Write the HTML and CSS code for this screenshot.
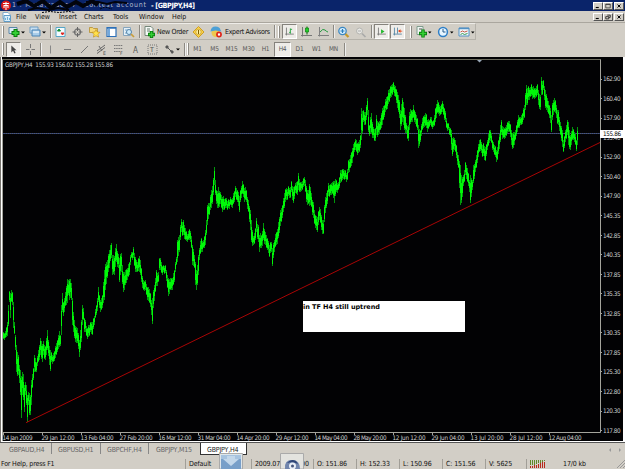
FILE: index.html
```html
<!DOCTYPE html>
<html lang="en">
<head>
  <meta charset="UTF-8">
  <title>GBPJPY,H4</title>
  <link rel="stylesheet" href="styles.css">
</head>
<body>
  <div class="app">
    <div class="titlebar">
      <svg class="logo" viewBox="0 0 12 11"><circle cx="6" cy="5.5" r="5" fill="#d81818"/><path d="M3 3.500h6M6 2v8M3.500 5.500h5M4 6v2M8 6v2" stroke="#fff" fill="none"/></svg>
      <div class="account">
        <span class="ghost">1 : MetaTrader 4 - Contest account</span>
        <svg class="scribble" viewBox="0 0 145 14"><path d="M3 4l9-3 8 5 9-5 8 7 9-6 7 5 9-5 7 4 9-5 6 4" stroke="#02040c" stroke-width="4" fill="none"/><path d="M72 2l12 0 9 2 8-2 12 1M14 10l9-2 12 2 9-2 11 2" stroke="#02040c" stroke-width="2" fill="none"/><path d="M28 12.500l8-1 9 1 10-1 6 1M86 9l5-2 7 2" stroke="#02040c" stroke-dasharray="2 1" fill="none"/></svg>
      </div>
      <b class="doc">- [GBPJPY,H4]</b>
      <div class="winbtns">
        <svg viewBox="0 0 10 8"><path d="M2 6h4" stroke="#000" stroke-width="1.500"/></svg>
        <svg viewBox="0 0 10 8"><path d="M2 1.500h6v5H2zM2 2h6" stroke="#333" fill="none"/></svg>
        <svg class="close" viewBox="0 0 10 8"><path d="M3 2l4 4M7 2l-4 4" stroke="#000" stroke-width="1.300"/></svg>
      </div>
    </div>

    <div class="menubar">
      <svg class="docicon" viewBox="0 0 10 10"><path d="M1 .5h5l2 2v4H1z" fill="#fff" stroke="#7fabcd"/><path d="M2 3.500h6.500v6H2z" fill="#d9eefb" stroke="#5f9cc8"/><path d="M3.500 8V6M5.500 8V5M7.500 8V6" stroke="#6fb0d8"/></svg>
      <span class="m-file">File</span><span class="m-view">View</span><span class="m-insert">Insert</span><span class="m-charts">Charts</span><span class="m-tools">Tools</span><span class="m-window">Window</span><span>Help</span>
      <div class="winbtns">
        <svg viewBox="0 0 10 8"><path d="M2 6h4" stroke="#000" stroke-width="1.500"/></svg>
        <svg viewBox="0 0 10 8"><path d="M4 1.500h4v3H6M2 3.500h4v3H2z" stroke="#111" fill="none"/></svg>
        <svg class="close" viewBox="0 0 10 8"><path d="M3 2l4 4M7 2l-4 4" stroke="#000" stroke-width="1.300"/></svg>
      </div>
    </div>

    <div class="toolbar main">
      <i class="grip"></i>
      <svg class="ic drop" viewBox="0 0 21 14"><path d="M3 2.500h8v6H3z" fill="#dcecf7" stroke="#5d87a8"/><path d="M9.500 4v8M5.500 8h8" stroke="#087d0c" stroke-width="4"/><path d="M9.500 5v6M6.500 8h6" stroke="#35cf35" stroke-width="2"/><path d="M15 6.500h4l-2 2z"/></svg>
      <svg class="ic drop" viewBox="0 0 21 14"><path d="M3 2h8v6H3z" fill="#c7dff1" stroke="#6f9ec5"/><path d="M5 5h8v6H5z" fill="#a9cdea" stroke="#4a83b4"/><path d="M6 7h6" stroke="#fff"/><path d="M15 6.500h4l-2 2z"/></svg>
      <i class="sep"></i>
      <svg class="ic" viewBox="0 0 17 14"><path d="M4 2.500h9v9H4z" fill="#f4fbff" stroke="#57a6c8"/><path d="M5.500 6l1.500-2 1.500 2z" stroke="#0a8e2c" fill="#0a8e2c"/><path d="M9 8h3l-1.500 2z" fill="#e02820" stroke="#e02820"/></svg>
      <svg class="ic" viewBox="0 0 17 14"><circle cx="8.500" cy="7" r="3" fill="none" stroke="#777" stroke-width="1.300"/><path d="M8.500 2v4M8.500 8v4M3.500 7h4M9.500 7h4" stroke="#666"/></svg>
      <svg class="ic" viewBox="0 0 17 14"><path d="M3.500 2.500h3l1 1h4v4h-8z" fill="#f4d777" stroke="#b58e2e" stroke-width=".8"/><path d="M10 4.500l1.300 2.500 2.700.3-2 2 .6 2.800L10 10.800l-2.600 1.300.6-2.800-2-2 2.700-.3z" fill="#ffe04a" stroke="#c08a10" stroke-width=".6"/></svg>
      <svg class="ic" viewBox="0 0 17 14"><path d="M4 2.500h9v9H4z" fill="#fff" stroke="#2d70b8" stroke-width="1.200"/><path d="M4 3h9" stroke="#2d70b8" stroke-width="1.500"/><path d="M5 4h2v7H5z" fill="#72a8dc"/></svg>
      <svg class="ic" viewBox="0 0 17 14"><path d="M3.500 2.500h7v8h-7z" fill="#e6f0f7" stroke="#86a5bd"/><path d="M5 5h4M5 8h3" stroke="#75a7cc"/><circle cx="9" cy="7" r="2.500" fill="#cdeafb" stroke="#5484aa"/><path d="M11 9l3 3" stroke="#c89d3b" stroke-width="1.700"/></svg>
      <i class="sep s2"></i>
      <svg class="ic" viewBox="0 0 17 14"><path d="M4 1.500h6l2 2v7H4z" fill="#f6faf8" stroke="#74877a"/><path d="M6 4h3M6 6h3" stroke="#657b6b"/><path d="M10.500 6v7M7 9.500h7" stroke="#087d0c" stroke-width="3.400"/><path d="M10.500 6.800v5.400M7.800 9.500h5.400" stroke="#35cf35" stroke-width="1.600"/></svg>
      <span class="neworder">New Order</span>
      <svg class="ic" viewBox="0 0 17 14"><path d="M7.500 1.500L13 7l-5.500 5.500L2 7z" fill="#f9d34b" stroke="#c79010" stroke-width=".8"/><circle cx="7.500" cy="7" r="2.700" fill="#fff0a0" stroke="#b98610" stroke-width=".6"/><path d="M7.500 5v4" stroke="#806000"/></svg>
      <svg class="ic" viewBox="0 0 17 14"><ellipse cx="7.500" cy="7.500" rx="4" ry="4.500" fill="#edc84e"/><path d="M2.500 6.500q.5-5 5-5T12.500 5l1 1.500-6-1z" fill="#4da0d6"/><circle cx="11" cy="9.500" r="2.900" fill="#df2318"/><path d="M9.900 8.400h2.200v2.200H9.900z" fill="#fff"/></svg>
      <span class="experts">Expert Advisors</span>
      <i class="sep s3"></i><i class="grip g2"></i>
      <svg class="ic btn on b1" viewBox="0 0 15 15"><path d="M4 3v9M2.500 10.500h10" stroke="#777" fill="none"/><path d="M8.500 4v6M7 8.500h1.500M8.500 5h2" stroke="#18a335"/></svg>
      <svg class="ic c1" viewBox="0 0 17 14"><path d="M4.500 2v9.500M3 10.500h11" stroke="#777" fill="none"/><path d="M9 1.500v8" stroke="#096c0b"/><path d="M7.500 3h3v4h-3z" fill="#20d028" stroke="#087d0c" stroke-width=".7"/></svg>
      <svg class="ic" viewBox="0 0 17 14"><path d="M4.500 2v9.500M3 10.500h11" stroke="#808080" fill="none"/><path d="M5 7q3-4 5-2t3 2" stroke="#219a3c" fill="none"/></svg>
      <i class="sep s4"></i>
      <svg class="ic" viewBox="0 0 17 14"><path d="M10 8.500l3.500 3.500" stroke="#c69a29" stroke-width="2.200"/><circle cx="7.500" cy="6" r="3.700" fill="#d8f0ff" stroke="#3d87c0" stroke-width="1.300"/><path d="M5.500 6h4M7.500 4v4" stroke="#267dbd" stroke-width="1.200"/></svg>
      <svg class="ic" viewBox="0 0 17 14"><path d="M10 8.500l3.500 3.500" stroke="#aaa" stroke-width="1.700"/><circle cx="7.500" cy="6" r="3" fill="#e8e8e5" stroke="#b4b4b0"/><path d="M6 6h3" stroke="#aaa"/></svg>
      <i class="sep s5"></i>
      <svg class="ic btn on" viewBox="0 0 15 15"><path d="M4 3v9M2.500 10.500h10" stroke="#777"/><path d="M7 5l4 2.500-4 2.500z" fill="#24b72d"/></svg>
      <svg class="ic btn on b3" viewBox="0 0 15 15"><path d="M4 3v9M2.500 10.500h10M7.500 3v7" stroke="#5585a5"/><path d="M8 7l3-2v1.500h2v1h-2V9z" fill="#e44317"/></svg>
      <i class="grip g3"></i>
      <svg class="ic drop d1" viewBox="0 0 21 14"><path d="M3 1.500h6v8H3z" fill="#eef6f2" stroke="#7f9b8c"/><path d="M5 4h3" stroke="#555"/><path d="M9 4.500v8M5 8.500h8" stroke="#087d0c" stroke-width="3.400"/><path d="M9 5.300v6.400M5.800 8.500h6.400" stroke="#35cf35" stroke-width="1.700"/><path d="M14 6.500h3.500l-1.700 2z"/></svg>
      <svg class="ic drop" viewBox="0 0 21 14"><circle cx="8" cy="7" r="4.400" fill="#e7f5ff" stroke="#2e7fc7" stroke-width="1.500"/><path d="M8 4v3h2.500" fill="none" stroke="#265b8a"/><path d="M15 6.500h3.500l-1.700 2z"/></svg>
      <svg class="ic drop" viewBox="0 0 21 14"><path d="M3 3h10v8H3z" fill="#eff6fb" stroke="#5291c4"/><path d="M3 3.500h10" stroke="#5291c4" stroke-width="1.500"/><path d="M4.500 7l2-1 2 1 3-1" stroke="#c85b46" fill="none"/><path d="M4.500 9.500l2-1 2 1 3-1" stroke="#389b52" fill="none"/><path d="M15 6.500h3.500l-1.700 2z"/></svg>
    </div>

    <div class="toolbar draw">
      <i class="grip"></i>
      <svg class="btn on cur" viewBox="0 0 15 15"><path d="M5 3v8l2-2 1.500 3.200 1.500-.7L8.500 8.500H11z" fill="#444"/></svg>
      <svg class="ic x1" viewBox="0 0 17 14"><path d="M8.500 2v4M8.500 9v4M4 7.500h3.500M9.500 7.500H13" stroke="#777"/></svg>
      <i class="sep t1"></i>
      <svg class="ic" viewBox="0 0 17 14"><path d="M8.500 3.500v8" stroke="#888"/></svg>
      <svg class="ic" viewBox="0 0 17 14"><path d="M5 7.500h7" stroke="#777"/></svg>
      <svg class="ic" viewBox="0 0 17 14"><path d="M5 11l7-7" stroke="#777"/></svg>
      <svg class="ic" viewBox="0 0 17 14"><path d="M4 9l8-6M4 11.500l8-6M6 4l3 5" stroke="#666"/><text x="10" y="12.500" font-size="5">E</text></svg>
      <svg class="ic" viewBox="0 0 17 14"><path d="M4 3.500h9M4 6.500h9M4 9.500h6" stroke="#777" stroke-dasharray="1.500 .7"/><text x="10" y="12.500" font-size="5">F</text></svg>
      <svg class="ic" viewBox="0 0 17 14"><text x="6" y="10.500" font-size="8">A</text></svg>
      <svg class="ic" viewBox="0 0 17 14"><path d="M4 3h9v9H4z" fill="none" stroke="#777" stroke-dasharray="1 1"/><text x="6" y="10" font-size="7">T</text></svg>
      <svg class="ic drop" viewBox="0 0 21 14"><path d="M4 5l2-2 2 2-2 2zM9 9l2-1 2 2-2 2z" fill="#555"/><path d="M7 6l3 3" stroke="#555"/><path d="M15 6.500h4l-2 2z"/></svg>
      <i class="sep t2"></i><i class="grip g4"></i>
      <span class="tf">M1</span><span class="tf">M5</span><span class="tf">M15</span><span class="tf">M30</span><span class="tf">H1</span><span class="tf on">H4</span><span class="tf">D1</span><span class="tf">W1</span><span class="tf">MN</span>
      <i class="sep"></i>
    </div>

    <div class="chart">
      <svg id="plot" width="625" height="385" viewBox="0 57 625 385">
        <rect x="2" y="57" width="621" height="384" fill="#020204"/>
        <path d="M2.500 441V59.500H600.500V432.500H3" fill="none" stroke="#a4a49c"/>
        <path d="M3 59.500h597" stroke="#6b6b5c"/>
        <path d="M477 60h5l-2.500 2.500z" fill="#9aa8b8"/>
        <path d="M3 133.500h597" stroke="#555a66"/>
        <path d="M3 133.500h597" stroke="#2b3f7c" stroke-dasharray="1 1"/>
        <text x="5" y="66.500" textLength="108" font-size="6.200">GBPJPY,H4&#160; 155.93 156.02 155.28 155.86</text>
        <g id="bars"></g>
        <path d="M26 422.700L600 142.500" stroke="#a80505" fill="none"/>
        <g id="axes"></g>
        <rect x="600" y="130" width="23" height="8" fill="#fff"/>
        <text class="now" x="603" y="136.300" textLength="18">155.86</text>
        <rect x="303" y="301" width="162" height="31" fill="#fff"/>
        <text class="note" x="303" y="308.500" textLength="77">in TF H4 still uptrend</text>
      </svg>
    </div>

    <div class="tabs">
      <span class="tab a">GBPAUD,H4</span><span class="tab b">GBPUSD,H1</span><span class="tab c">GBPCHF,H4</span><span class="tab d">GBPJPY,M15</span><span class="tab active">GBPJPY,H4</span>
      <svg class="arrows" viewBox="0 0 14 8"><path d="M3 2v4L1 4zM11 2v4l2-2z" fill="#999"/></svg>
    </div>

    <div class="status">
      <span class="help">For Help, press F1</span>
      <span class="cell profile">Default</span>
      <span class="cell date">2009.07.08 00:00</span>
      <span class="cell">O: 151.86</span><span class="cell">H: 152.33</span><span class="cell">L: 150.96</span><span class="cell">C: 151.56</span>
      <span class="cell vol">V: 5625</span>
      <span class="cell conn"><svg viewBox="0 0 15 8"><path d="M.5 0v5M2.500 0v5M4.500 0v5M6.500 0v4M8.500 0v3M10.500 0v3M12.500 0v2M14.500 0v1" stroke="#5d8a28"/><path d="M.5 6v2M2.500 6v2M4.500 5v3M6.500 5v3M8.500 4v4M10.500 3v5M12.500 2v6M14.500 2v6" stroke="#b9281c"/></svg>17/0 kb</span>
      <svg class="resize" viewBox="0 0 8 8"><path d="M0 8l8-8M3 8l5-5M6 8l2-2" stroke="#999"/></svg>
      <svg class="float f1" viewBox="0 0 24 16"><path d="M.5.500h23V16H.5z" fill="#dfe6ea" stroke="#aaa"/><path d="M2 2h20v14H2z" fill="#789fc9"/><path d="M2 2h20v4H2z" fill="#a7c3df"/><path d="M8 3h8v3h4l-8 7-8-7h4z" fill="#c3d7ea"/></svg>
      <svg class="float f2" viewBox="0 0 24 16"><path d="M.5.500h23V16H.5z" fill="#e3e3df" stroke="#aaa"/><path d="M5 16q-1-9 7-9t8 9z" fill="#7185ad"/><path d="M7 10q4-5 9-2l2 3q-5-3-11-1z" fill="#2f4678"/><circle cx="12.500" cy="13" r="3.500" fill="#e9eef6"/><circle cx="12.500" cy="13" r="1.500" fill="#46557c"/></svg>
    </div>
  </div>
  <script src="chart.js"></script>
</body>
</html>
```
FILE: styles.css
```css
:root {
  --face: #d2cec6;
  --shade: #8c8982;
  --navy: #0a246a;
}
body {
  margin: 0;
  background: var(--face);
  font-family: "DejaVu Sans Condensed", "DejaVu Sans", Tahoma, sans-serif;
  font-stretch: condensed;
  font-size: 7px;
  line-height: 10px;
  color: #111;
  overflow: hidden;
}
.app {
  width: 625px;
  height: 469px;
  display: flex;
  flex-direction: column;
}
svg {
  display: block;
  flex: none;
}
span, b {
  white-space: nowrap;
  flex: none;
}

/* title and menu */
.titlebar {
  height: 11px;
  background: var(--navy);
  color: #fff;
  display: flex;
  align-items: center;
}
.logo {
  width: 12px;
  height: 11px;
}
.account {
  width: 139px;
  height: 11px;
  position: relative;
}
.ghost {
  color: #b4bccd;
  letter-spacing: 0.75px;
}
.scribble {
  position: absolute;
  left: 2px;
  top: 0;
  width: 145px;
  height: 14px;
}
.doc {
  font-size: 7.2px;
  width: 48px;
  letter-spacing: -0.4px;
}
.winbtns {
  display: flex;
  margin-left: auto;
  margin-right: 1px;
}
.winbtns svg {
  width: 10px;
  height: 8px;
  background: var(--face);
  box-sizing: border-box;
  border: 1px solid;
  border-color: #fff #555 #555 #fff;
}
.winbtns .close {
  margin-left: 1px;
}
.menubar {
  height: 12px;
  display: flex;
  align-items: center;
  border-bottom: 1px solid #aaa69e;
  box-sizing: border-box;
}
.docicon {
  width: 10px;
  height: 10px;
  margin: 0 4px 0 2px;
}
.m-file { width: 19px; }
.m-view { width: 24px; }
.m-insert { width: 25px; }
.m-charts { width: 29px; letter-spacing: -0.2px; }
.m-tools { width: 26px; }
.m-window { width: 33px; }

/* toolbars */
.toolbar {
  height: 17px;
  display: flex;
  align-items: center;
  box-sizing: border-box;
}
.main {
  width: 476px;
  border-top: 1px solid #eeece8;
  border-right: 1px solid #b5b2aa;
  border-bottom: 1px solid #b5b2aa;
}
.draw {
  padding-top: 1px;
}
.ic {
  width: 17px;
  height: 14px;
}
.ic.drop {
  width: 21px;
}
.grip {
  width: 0;
  height: 12px;
  margin: 0 2px;
  border-left: 1px solid #fff;
  border-right: 1px solid var(--shade);
}
.sep {
  width: 0;
  height: 13px;
  margin-left: 2px;
  border-left: 1px solid var(--shade);
  border-right: 1px solid #eee;
}
.neworder {
  width: 34px;
  letter-spacing: -0.3px;
  margin-left: -1px;
}
.experts {
  width: 49px;
  letter-spacing: -0.3px;
}
.s3 { margin-left: 0; }
.s4 { margin-left: 1px; }
.g2 { margin: 0 2px; }
.g3 { margin: 0 0 0 5px; }
.s5 { margin: 0 1px 0 2px; }
.btn {
  width: 15px;
  height: 15px;
}
.on {
  background: #eeece8;
  border: 1px solid;
  border-color: #85827c #fff #fff #85827c;
  box-sizing: border-box;
}
.c1 { margin-left: 1px; }
.b3 { margin-left: 1px; }
.d1 { margin-left: 2px; }
.toolbar text {
  fill: #555;
}
.x1 { margin-left: 1px; }
.t1 { margin: 0 0 0 1px; }
.t2 { margin-left: 2px; }
.g4 { margin: 0 0 0 1px; }
.tf {
  width: 17px;
  height: 15px;
  line-height: 15px;
  text-align: center;
  box-sizing: border-box;
  font-size: 6.5px;
  letter-spacing: -0.2px;
  color: #555;
}
.tf.on {
  line-height: 13px;
}

/* chart window */
.chart {
  height: 385px;
  background: linear-gradient(90deg, #77746e 1px, #fff 1px 2px, #fff 2px);
}
.chart text {
  fill: #d0d0d0;
  font-size: 6.3px;
}
.chart .now {
  fill: #000;
}
.chart .note {
  fill: #000;
  font-family: "DejaVu Sans", sans-serif;
  font-weight: bold;
  font-stretch: normal;
  font-size: 6.5px;
}

/* chart tabs */
.tabs {
  height: 15px;
  display: flex;
  align-items: flex-start;
  border-top: 1px solid #555;
  box-sizing: border-box;
  color: #666;
}
.tab {
  box-sizing: border-box;
  height: 11px;
  letter-spacing: -0.2px;
  border-right: 1px solid #888;
  line-height: 14px;
}
.tab.a { width: 52px; padding-left: 9px; }
.tab.b { width: 49px; padding-left: 6px; }
.tab.c { width: 48px; padding-left: 6px; }
.tab.d { width: 51px; padding-left: 7px; border: 0; }
.tab.active {
  width: 47px;
  height: 12px;
  padding-left: 6px;
  background: #fff;
  color: #222;
  border: 1px solid #333;
  border-top: 0;
}
.arrows {
  width: 14px;
  height: 8px;
  margin: 3px 3px 0 auto;
}

/* status bar */
.status {
  height: 12px;
  display: flex;
  align-items: center;
  padding-top: 1px;
  box-sizing: border-box;
  position: relative;
}
.help {
  width: 184px;
  padding-left: 1px;
  letter-spacing: -0.18px;
}
.cell {
  width: 43px;
  height: 10px;
  box-sizing: border-box;
  padding-left: 3px;
  border-left: 1px solid #a19e97;
  letter-spacing: -0.12px;
}
.profile { width: 66px; }
.date { width: 62px; letter-spacing: -0.15px; }
.vol { width: 41px; }
.conn {
  width: 86px;
  display: flex;
}
.conn svg {
  width: 15px;
  height: 8px;
  margin: 1px 18px 0 0;
}
.resize {
  width: 8px;
  height: 8px;
  margin-left: auto;
}
.float {
  position: absolute;
  width: 24px;
  height: 16px;
  bottom: 0;
}
.f1 { left: 219px; }
.f2 { left: 280px; }
```
FILE: chart.js
```js
// x, high, low for each bar group, in window pixels
const prices = `3 332 339,5 331 338,7 322 336,8 305 326,9 291 302,10 293 318,11 290 302,12 292 305,13 302 328,14 322 334,15 335 350,16 345 372,18 355 375,19 365 383,20 370 395,21 376 418,22 372 395,23 374 400,24 385 412,25 382 395,26 385 405,27 395 422,28 392 405,29 393 415,30 395 415,31 380 405,32 374 388,33 368 380,34 355 372,35 358 372,36 362 372,37 356 366,38 350 362,39 345 360,40 338 355,42 344 362,43 341 355,45 346 360,47 330 350,48 340 356,50 350 371,51 352 362,53 353 362,55 346 358,57 340 352,59 331 347,60 335 346,61 305 335,62 293 312,63 302 316,65 292 306,67 279 303,68 280 295,69 279 300,71 283 300,72 298 325,73 312 332,75 326 342,77 328 343,79 340 357,80 330 350,81 320 342,82 305 325,83 308 320,84 318 332,86 326 336,88 325 337,90 322 332,92 322 335,94 316 325,96 305 315,98 287 302,100 300 312,102 295 308,104 270 300,105 264 290,107 260 278,109 250 268,111 243 258,112 255 275,114 256 275,116 244 262,118 254 268,119 258 282,121 253 272,123 272 292,125 270 285,127 268 280,129 262 275,131 252 258,133 247 258,135 257 272,137 262 272,139 256 272,141 268 282,143 280 290,145 280 290,147 287 300,149 289 303,151 300 315,152 298 324,153 290 308,155 278 292,156 270 286,158 272 282,159 258 270,161 262 273,163 265 272,165 265 273,167 275 288,168 278 296,170 278 290,172 278 290,174 270 282,176 257 265,177 240 262,179 235 252,180 225 240,181 219 232,183 220 235,185 228 240,187 234 242,189 229 240,191 236 248,192 245 265,194 255 268,195 262 285,196 270 290,198 255 275,199 248 260,201 238 252,203 240 248,205 230 245,206 220 235,207 205 225,209 203 215,211 190 208,213 178 195,214 167 185,215 180 195,216 190 204,218 187 208,220 192 204,222 197 212,225 198 208,228 199 208,231 199 207,233 193 204,235 186 197,237 190 202,239 196 212,240 190 202,242 181 194,244 188 202,246 190 202,248 200 212,250 210 230,251 220 242,253 236 245,255 228 240,256 218 232,258 225 242,259 235 252,261 235 248,263 223 240,265 232 245,267 238 250,269 245 257,271 242 252,272 248 266,274 240 252,276 232 245,278 222 238,280 210 226,282 205 218,284 193 208,286 188 200,288 186 196,290 187 198,291 181 192,293 187 203,295 183 193,297 181 195,298 173 190,300 182 192,302 181 190,304 177 186,306 186 202,308 190 204,309 184 206,311 193 207,313 202 218,315 215 228,317 217 232,319 207 220,321 215 230,323 220 234,324 205 222,326 193 208,328 183 196,330 184 195,332 182 194,334 181 203,336 180 192,338 182 190,340 170 183,342 169 180,344 170 180,346 173 182,348 160 173,350 155 168,352 148 163,354 142 152,356 140 152,358 142 153,360 135 148,361 108 140,363 110 122,365 112 125,367 98 115,368 110 132,369 125 136,371 113 134,373 127 138,375 128 141,376 115 135,378 122 135,380 118 130,382 108 125,384 105 117,386 97 110,388 90 104,390 86 98,392 84 95,393 82 92,395 86 97,397 92 108,399 100 118,400 110 130,402 98 122,404 108 130,405 115 133,406 123 133,408 125 141,409 112 130,411 110 122,413 105 118,415 112 124,417 118 130,418 125 148,420 130 142,422 118 130,424 115 127,426 114 128,427 120 132,429 120 127,431 117 127,433 120 127,435 108 122,437 100 113,438 102 114,440 106 115,442 101 112,444 108 120,446 118 128,448 123 130,450 128 137,451 130 150,452 138 156,454 138 150,456 145 158,458 155 168,460 165 205,461 175 203,463 175 186,465 162 175,467 168 182,469 180 192,470 175 203,472 180 190,473 165 183,475 160 172,477 150 163,479 140 152,481 142 153,483 143 156,485 147 161,487 140 150,489 130 143,491 133 143,492 140 150,494 145 155,496 150 162,498 140 154,500 125 142,501 120 135,503 127 138,505 127 138,507 122 133,509 121 132,511 130 145,513 132 148,515 130 140,517 120 132,518 115 128,520 117 125,522 113 124,524 105 118,526 85 105,528 86 100,530 87 97,531 84 96,533 86 98,535 88 98,537 84 95,538 90 105,540 95 110,541 77 95,543 80 90,545 90 108,547 98 112,549 105 118,551 115 132,552 103 120,554 98 112,556 105 118,558 110 125,560 122 135,562 130 147,563 140 152,565 130 142,567 120 135,568 122 145,570 135 150,572 127 140,574 132 142,576 140 151,577 127 145,578 133 138`
  .split(',').map(p => p.split(' ').map(Number));

const ns = 'http://www.w3.org/2000/svg';

function add(parent, name, attrs, text) {
  const el = document.createElementNS(ns, name);
  for (const key in attrs) el.setAttribute(key, attrs[key]);
  if (text) el.textContent = text;
  document.getElementById(parent).appendChild(el);
}

// wicks are dark, the bodies inside them bright
let wicks = '';
let bodies = '';
for (let i = 0; i < prices.length - 1; i++) {
  const [x, hi, lo] = prices[i];
  const [nx, nhi, nlo] = prices[i + 1];
  for (let c = x; c < nx; c++) {
    const t = (c - x) / (nx - x);
    const jig = c === x ? 0 : (c * 7) % 5 - 2;
    const top = Math.round(hi + (nhi - hi) * t + jig);
    const bottom = Math.round(lo + (nlo - lo) * t + jig);
    const h = bottom - top;
    wicks += `M${c + 0.5} ${top}V${bottom}`;
    bodies += `M${c + 0.5} ${top + Math.round(h * (0.1 + c % 3 * 0.1))}V${bottom - Math.round(h * (0.1 + (c + 1) % 3 * 0.1))}`;
  }
}
add('bars', 'path', { d: wicks, stroke: '#00980a', fill: 'none' });
add('bars', 'path', { d: bodies, stroke: '#00f808', fill: 'none' });

// price scale
const levels = ['162.90', '160.40', '157.90', '155.40', '152.90', '150.40', '147.90', '145.35', '142.85', '140.35', '137.85', '135.35', '132.85', '130.35', '127.85', '125.30', '122.80', '120.30', '117.80'];
levels.forEach((label, i) => {
  const y = 79 + i * 19.53;
  add('axes', 'path', { d: `M600 ${Math.floor(y) + 0.5}h2`, stroke: '#a4a49c' });
  add('axes', 'text', { x: 603, y: y + 2.3, textLength: 17.5 }, label);
});

// time scale
const times = ['14 Jan 2009', '29 Jan 12:00', '13 Feb 04:00', '27 Feb 20:00', '16 Mar 12:00', '31 Mar 04:00', '14 Apr 20:00', '29 Apr 12:00', '14 May 04:00', '28 May 20:00', '12 Jun 12:00', '29 Jun 04:00', '13 Jul 20:00', '28 Jul 12:00', '12 Aug 04:00'];
times.forEach((label, i) => {
  const x = 3 + i * 39;
  add('axes', 'path', { d: `M${x + 0.5} 432v3`, stroke: '#a4a49c' });
  add('axes', 'text', { x: x - 0.5, y: 440, textLength: i ? 33 : 30 }, label);
});
```
